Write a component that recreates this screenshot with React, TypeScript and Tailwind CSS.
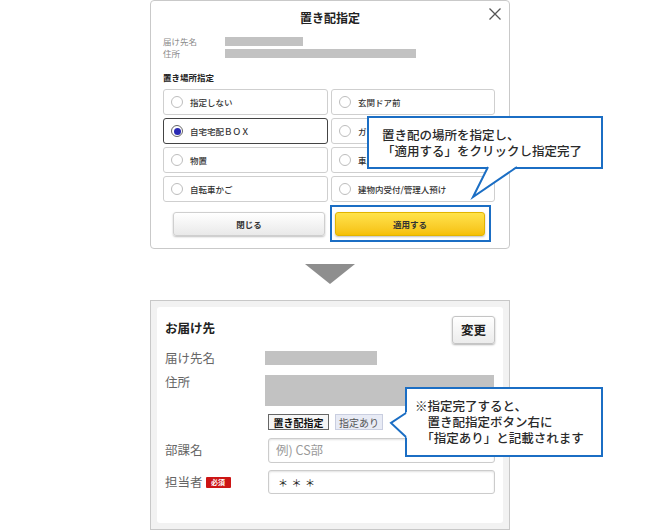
import type { ReactNode } from "react";

// Two stacked screens: the 置き配 modal, a down arrow, then the
// お届け先 card. The blue callouts sit on top of both.

type Option = { label: string; selected?: boolean };

const options: Option[] = [
  { label: "指定しない" },
  { label: "玄関ドア前" },
  { label: "自宅宅配ＢＯＸ", selected: true },
  { label: "ガスメーターボックス" },
  { label: "物置" },
  { label: "車庫内" },
  { label: "自転車かご" },
  { label: "建物内受付/管理人預け" },
];

function Radio({ on }: { on?: boolean }) {
  if (on) {
    return (
      <span className="flex size-[12px] shrink-0 items-center justify-center rounded-full border border-[#666] bg-white">
        <span className="size-[7px] rounded-full bg-[#2a2ab4]" />
      </span>
    );
  }
  return (
    <span className="size-[12px] shrink-0 rounded-full border border-[#bdbdbd] bg-white" />
  );
}

function PlacementModal() {
  return (
    <div className="relative mx-auto h-[249px] w-[360px] rounded-[4px] border border-[#c9c9c9] bg-white">
      <div className="flex h-[33px] items-center justify-center text-[12px] font-bold text-[#222]">
        置き配指定
      </div>
      <svg
        className="absolute right-[8px] top-[7px]"
        width="12"
        height="12"
        viewBox="0 0 12 12"
        aria-hidden="true"
      >
        <path d="M0.5 0.5 L11.5 11.5 M11.5 0.5 L0.5 11.5" stroke="#555" strokeWidth="1.3" />
      </svg>

      <div className="px-[12px]">
        <div className="mt-[1px] text-[8.5px] text-[#8a8a8a]">
          <div className="flex h-[12px] items-center">
            <span className="w-[62px]">届け先名</span>
            <span className="h-[9px] w-[78px] bg-[#c2c2c2]" />
          </div>
          <div className="flex h-[12px] items-center">
            <span className="w-[62px]">住所</span>
            <span className="h-[9px] w-[191px] bg-[#c2c2c2]" />
          </div>
        </div>

        <div className="mt-[12px] flex h-[12px] items-center text-[8.5px] font-bold text-[#222]">
          置き場所指定
        </div>

        <div className="mt-[6px] grid grid-cols-[165px_164px] gap-x-[3px] gap-y-[3px]">
          {options.map((o) => (
            <div
              key={o.label}
              className={
                o.selected
                  ? "flex h-[26px] items-center gap-[7px] rounded-[3px] border border-[#444] pl-[7px] text-[8.5px] font-medium text-[#333]"
                  : "flex h-[26px] items-center gap-[7px] rounded-[3px] border border-[#cfcfcf] pl-[7px] text-[8.5px] font-medium text-[#333]"
              }
            >
              <Radio on={o.selected} />
              <span>{o.label}</span>
            </div>
          ))}
        </div>

        <div className="mt-[3px] flex items-start gap-[5px] pl-[10px]">
          <button className="mt-[7px] flex h-[24px] w-[152px] items-center justify-center rounded-[3px] border border-[#cfcfcf] bg-gradient-to-b from-white to-[#e9e9e9] text-[8.5px] font-bold text-[#333] shadow-[0_1px_2px_rgba(0,0,0,0.25)]">
            閉じる
          </button>
          <div className="h-[37px] w-[161px] border-2 border-[#1b6ec4] pl-[3px] pt-[5px]">
            <button className="flex h-[24px] w-[150px] items-center justify-center rounded-[3px] border border-[#e2b400] bg-gradient-to-b from-[#ffe34a] to-[#f6c000] text-[8.5px] font-bold text-[#333] shadow-[0_1px_2px_rgba(0,0,0,0.25)]">
              適用する
            </button>
          </div>
        </div>
      </div>
    </div>
  );
}

function Row({ label, children, className }: { label: ReactNode; children: ReactNode; className: string }) {
  return (
    <div className={className}>
      <div className="flex w-[100px] shrink-0 items-center text-[12.5px] text-[#666]">{label}</div>
      {children}
    </div>
  );
}

function DeliveryCard() {
  return (
    <div className="mx-auto mt-[16px] h-[230px] w-[360px] border border-[#c8c8c8] bg-[#f2f2f2] p-[6px]">
      <div className="h-full rounded-[3px] bg-white px-[8px] pt-[9px]">
        <div className="flex h-[28px] items-center justify-between">
          <span className="-mt-[3px] text-[12.5px] font-bold text-[#222]">お届け先</span>
          <button className="flex h-[28px] w-[43px] items-center justify-center rounded-[3px] border border-[#c4c4c4] bg-gradient-to-b from-white to-[#ececec] text-[12.5px] font-bold text-[#222] shadow-[0_1px_2px_rgba(0,0,0,0.3)]">
            変更
          </button>
        </div>

        <Row label="届け先名" className="mt-[7px] flex h-[14px]">
          <span className="h-[14px] w-[112px] bg-[#c2c2c2]" />
        </Row>

        <div className="mt-[10px] flex">
          <div className="w-[100px] shrink-0 text-[12.5px] leading-[14px] text-[#666]">住所</div>
          <span className="h-[31px] w-[229px] bg-[#c2c2c2]" />
        </div>

        <div className="ml-[103px] mt-[8px] flex h-[16px] gap-[6px]">
          <span className="flex h-[16px] w-[61px] items-center justify-center border border-[#666] bg-[#f6f6f6] text-[10px] font-bold text-[#111]">
            置き配指定
          </span>
          <span className="flex h-[16px] w-[48px] items-center justify-center border border-[#c9cee0] bg-[#e8ebf5] text-[10px] text-[#555]">
            指定あり
          </span>
        </div>

        <Row label="部課名" className="mt-[8px] flex h-[25px]">
          <div className="ml-[3px] flex h-[25px] w-[227px] items-center rounded-[3px] border border-[#cccccc] pl-[7px] text-[12.5px] text-[#9a9a9a] shadow-[inset_0_1px_2px_rgba(0,0,0,0.12)]">
            例) CS部
          </div>
        </Row>

        <Row
          label={
            <span className="flex items-center gap-[3px]">
              担当者
              <span className="flex h-[11px] w-[25px] items-center justify-center rounded-[1px] bg-[#cc1515] text-[7px] font-bold leading-none text-white">
                必須
              </span>
            </span>
          }
          className="mt-[7px] flex h-[24px]"
        >
          <div className="ml-[3px] flex h-[24px] w-[227px] items-center rounded-[3px] border border-[#cccccc] pl-[9px] text-[10px] tracking-[3.5px] text-[#222] shadow-[inset_0_1px_2px_rgba(0,0,0,0.12)]">
            ＊＊＊
          </div>
        </Row>
      </div>
    </div>
  );
}

export default function App() {
  return (
    <div className="relative h-[530px] w-[660px] overflow-hidden bg-white font-['Noto_Sans_CJK_JP',sans-serif]">
      <PlacementModal />

      <div className="mx-auto mt-[15px] h-0 w-0 border-l-[25px] border-r-[25px] border-t-[20px] border-l-transparent border-r-transparent border-t-[#8e8e8e]" />

      <DeliveryCard />

      {/* callout over the modal */}
      <div className="absolute left-[367px] top-[116px] flex h-[53px] w-[236px] flex-col justify-center border-2 border-[#1b6ec4] bg-white pl-[13px] text-[12.5px] font-medium leading-[16px] text-[#2a2a2a]">
        <span>置き配の場所を指定し、</span>
        <span>「適用する」をクリックし指定完了</span>
      </div>
      <svg className="absolute left-[465px] top-[166px]" width="60" height="34" viewBox="0 0 60 34" aria-hidden="true">
        <polygon points="23,0 8,31 52,0" fill="white" />
        <polyline points="23,1 8,31 52,1" fill="none" stroke="#1b6ec4" strokeWidth="2" />
      </svg>

      {/* callout over the card */}
      <div className="absolute left-[405px] top-[387px] flex h-[70px] w-[198px] flex-col justify-center border-2 border-[#1b6ec4] bg-white pl-[8px] text-[12.5px] font-medium leading-[16px] text-[#2a2a2a]">
        <span>※指定完了すると、</span>
        <span>　置き配指定ボタン右に</span>
        <span>　「指定あり」と記載されます</span>
      </div>
      <svg className="absolute left-[388px] top-[408px]" width="22" height="34" viewBox="0 0 22 34" aria-hidden="true">
        <polygon points="19,4 3,15 19,30" fill="white" />
        <polyline points="18,5 3,15 18,29" fill="none" stroke="#1b6ec4" strokeWidth="2" />
      </svg>
    </div>
  );
}
